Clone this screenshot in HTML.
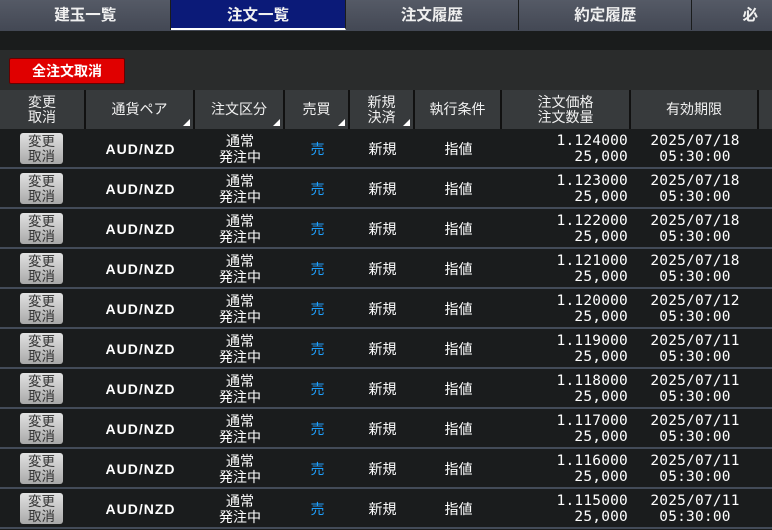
<!DOCTYPE html>
<html><head><meta charset="utf-8"><style>
*{margin:0;padding:0;box-sizing:border-box}
body{width:772px;height:530px;background:#1a1c1c;overflow:hidden;font-family:"Liberation Sans","Noto Sans CJK JP",sans-serif;color:#fff;position:relative}
.tabs{position:absolute;top:0;left:0;width:772px;height:31px;display:flex;background:linear-gradient(#555a66,#434854)}
.tab{height:30px;line-height:32px;text-align:center;font-weight:bold;font-size:15.5px;color:#f0f0f0;border-right:1px solid #1a1c1c}
.tab.act{background:#0b1a78;border-bottom:2px solid #fff}
.band{position:absolute;top:31px;left:0;width:772px;height:19px;background:#1a1c1c}
.area{position:absolute;top:50px;left:0;width:772px;height:40px;background:#2a2c2c}
.btn{position:absolute;left:9px;top:58px;width:116px;height:26px;background:#e00000;border:1px solid #600;border-radius:2px;font-weight:bold;font-size:14px;text-align:center;line-height:25px}
.hdr{position:absolute;top:90px;left:0;height:39px;width:772px;background:#373a3c;}
.hc{position:absolute;top:0;height:39px;border-right:2px solid #111;display:flex;align-items:center;justify-content:center;text-align:center;font-size:14px;line-height:15px;color:#f0f0f0}
.tri{position:absolute;right:3px;bottom:3px;width:0;height:0;border-left:7px solid transparent;border-bottom:7px solid #fff}
.row{position:absolute;left:0;width:772px;height:40px;background:#1a1c1d;border-bottom:2px solid #434b58}
.c{position:absolute;top:0;height:39px;display:flex;align-items:center;justify-content:center;text-align:center;font-size:14px;line-height:16px}
.b{position:absolute;left:20px;top:4px;width:43px;height:31px;border-radius:3px;background:linear-gradient(#e2e2e2,#a8a8a8);color:#333;font-size:13.5px;line-height:15px;text-align:center;display:flex;align-items:center;justify-content:center}
.mono{font-family:"DejaVu Sans Mono","Liberation Mono",monospace;font-size:14.5px;line-height:16px;letter-spacing:0.2px}
</style></head><body>
<div class="tabs">
<div class="tab" style="width:174px">建玉一覧</div>
<div class="tab act" style="width:177px">注文一覧</div>
<div class="tab" style="width:176px">注文履歴</div>
<div class="tab" style="width:176px">約定履歴</div>
<div class="tab" style="width:80px;text-align:left;padding-left:50px;border:none">必</div>
</div>
<div class="band"></div>
<div class="area"></div>
<div class="btn">全注文取消</div>
<div class="hdr">
<div class="hc" style="left:0;width:86px">変更<br>取消</div>
<div class="hc" style="left:86px;width:109px">通貨ペア<span class="tri"></span></div>
<div class="hc" style="left:195px;width:90px">注文区分<span class="tri"></span></div>
<div class="hc" style="left:285px;width:65px">売買<span class="tri"></span></div>
<div class="hc" style="left:350px;width:65px">新規<br>決済<span class="tri"></span></div>
<div class="hc" style="left:415px;width:87px">執行条件</div>
<div class="hc" style="left:502px;width:129px">注文価格<br>注文数量</div>
<div class="hc" style="left:631px;width:128px">有効期限</div>
</div>
<div id="rows"></div>
<script>
var p=["1.124000","1.123000","1.122000","1.121000","1.120000","1.119000","1.118000","1.117000","1.116000","1.115000"];
var d=["07/18","07/18","07/18","07/18","07/12","07/11","07/11","07/11","07/11","07/11"];
var h="";
for(var i=0;i<10;i++){
h+='<div class="row" style="top:'+(129+i*40)+'px">'+
'<div class="b">変更<br>取消</div>'+
'<div class="c" style="left:86px;width:109px;font-weight:bold;letter-spacing:1px">AUD/NZD</div>'+
'<div class="c" style="left:195px;width:90px">通常<br>発注中</div>'+
'<div class="c" style="left:285px;width:65px;color:#1ea0ff">売</div>'+
'<div class="c" style="left:350px;width:65px">新規</div>'+
'<div class="c" style="left:415px;width:87px">指値</div>'+
'<div class="c mono" style="left:502px;width:126px;justify-content:flex-end;text-align:right">'+p[i]+'<br>25,000</div>'+
'<div class="c mono" style="left:631px;width:128px">2025/'+d[i]+'<br>05:30:00</div>'+
'</div>';}
document.getElementById("rows").innerHTML=h;
</script>
</body></html>
